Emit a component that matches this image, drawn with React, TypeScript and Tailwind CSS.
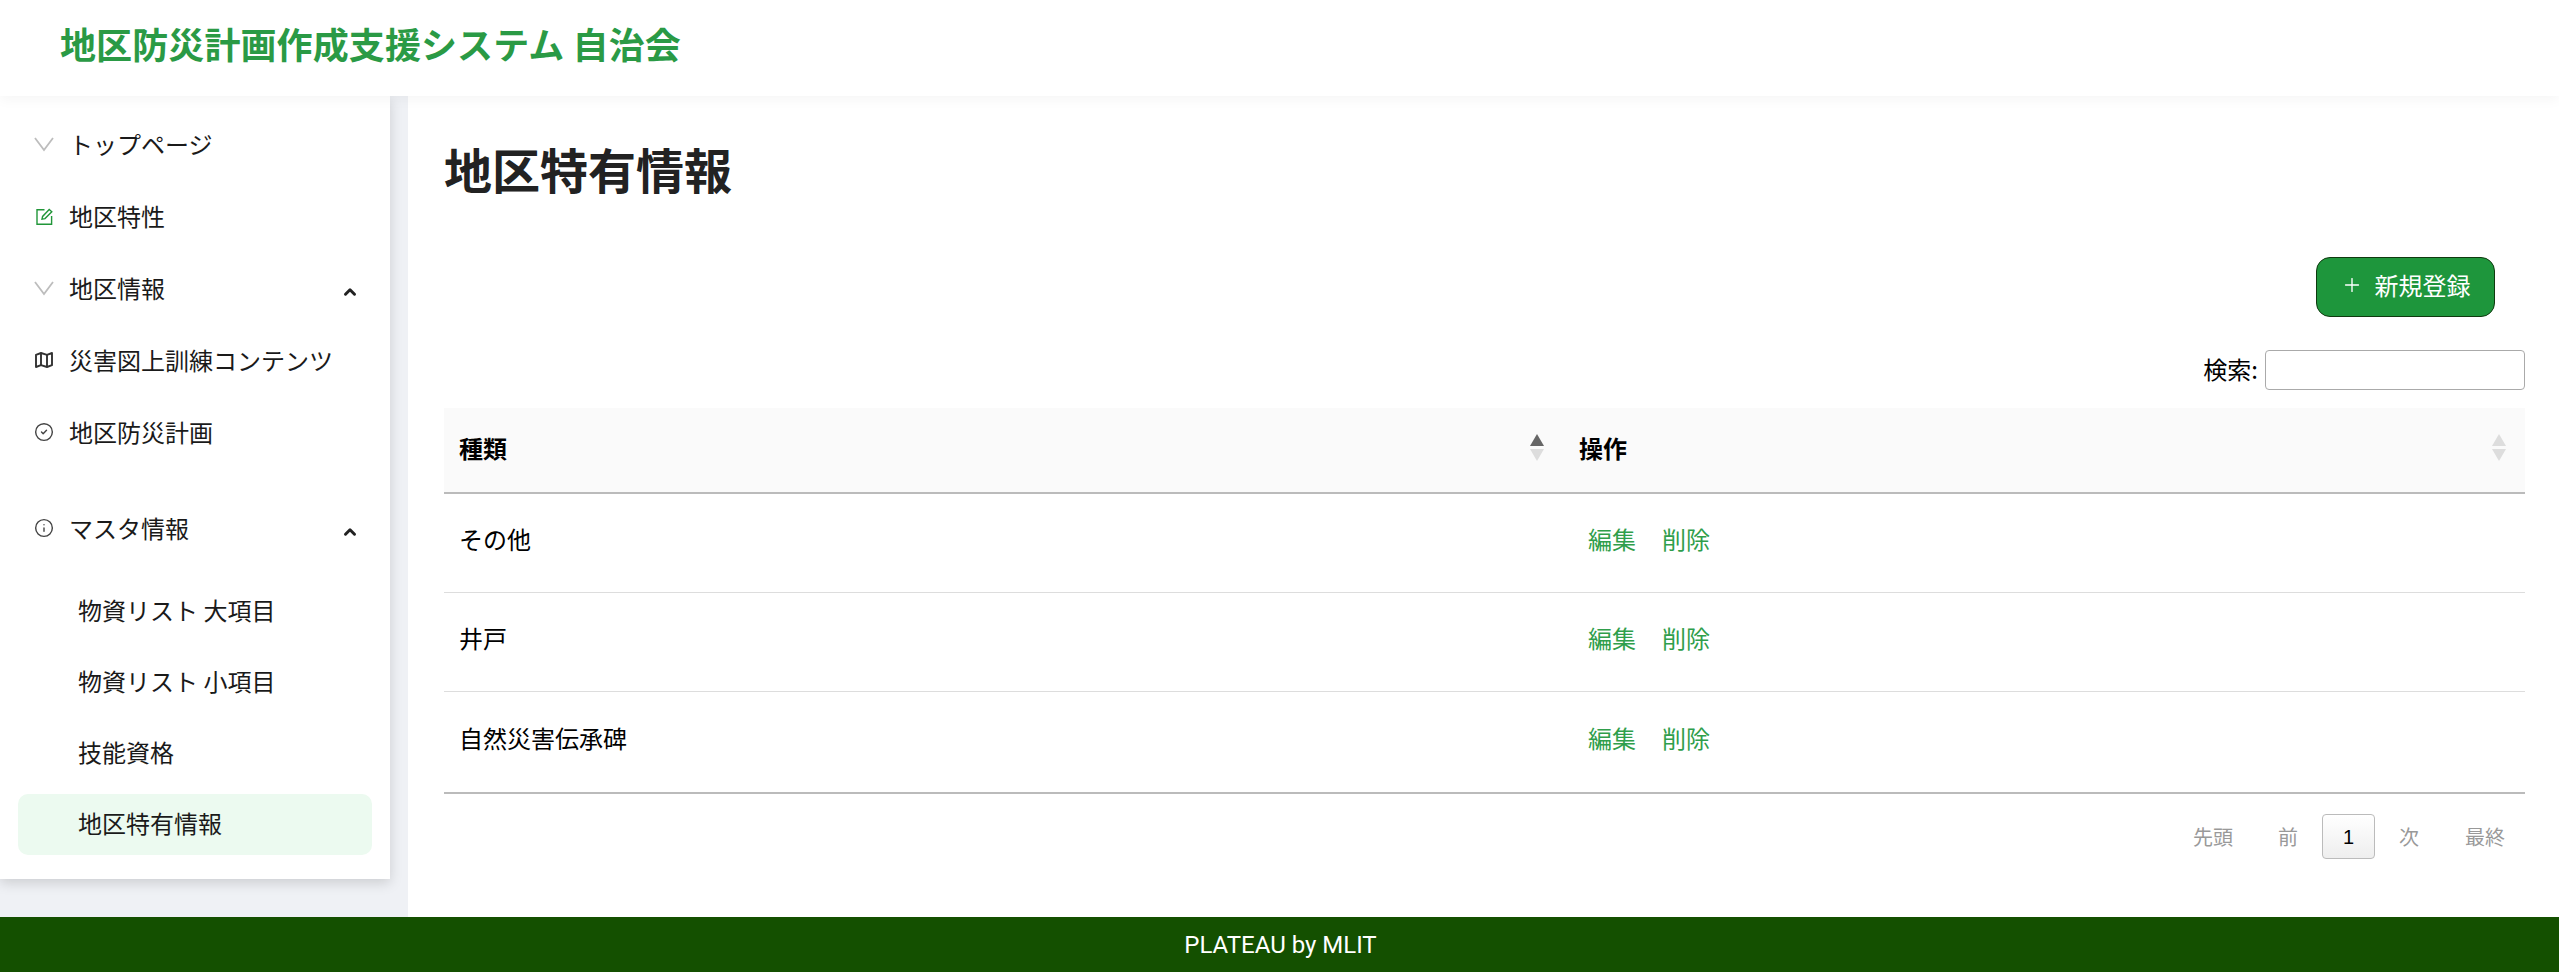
import { ChevronUp, CircleCheck, Info, Plus } from "lucide-react";
import type { ReactNode } from "react";

const rows = ["その他", "井戸", "自然災害伝承碑"];

function NavItem({ icon, label, open }: { icon: ReactNode; label: string; open?: boolean }) {
    return (
        <div className="flex h-[72px] items-center pl-[34px] pr-[31px]">
            <div className="flex w-[35px] shrink-0 items-center">{icon}</div>
            <span className="flex-1 text-[24px] leading-[36px] text-[#1a1a1a]">{label}</span>
            {open && <ChevronUp className="mt-[7px] h-[18px] w-[18px] text-[#222]" strokeWidth={4} />}
        </div>
    );
}

function SubItem({ label, active }: { label: string; active?: boolean }) {
    return (
        <div className={`mx-[18px] flex h-[61px] items-center rounded-[10px] pb-[4px] pl-[60px] text-[24px] text-[#1a1a1a] ${active ? "bg-[#ecfaf0]" : ""}`}>
            {label}
        </div>
    );
}

function SortIcon({ active }: { active?: boolean }) {
    return (
        <div className="flex flex-col gap-[3px]">
            <div className={`h-0 w-0 border-x-[7px] border-b-[12px] border-x-transparent ${active ? "border-b-[#666]" : "border-b-[#ddd]"}`} />
            <div className="h-0 w-0 border-x-[7px] border-t-[12px] border-x-transparent border-t-[#ddd]" />
        </div>
    );
}

function ThinChevron() {
    return (
        <svg width="20" height="15" viewBox="0 0 20 15" fill="none" stroke="#bdbdbd" strokeWidth="1.8" className="mt-[1px]">
            <path d="M1 1 L10 13 L19 1" />
        </svg>
    );
}

function EditIcon() {
    return (
        <svg width="17" height="17" viewBox="0 0 17 17" fill="none" stroke="#219639" strokeWidth="1.4" className="ml-[2px]">
            <path d="M8.5 1.7 H1 V16.3 H15.6 V8" />
            <path d="M6 11.2 L6.6 8.4 L13.2 1.4 L15.8 3.8 L9 10.6 Z" />
        </svg>
    );
}

function MapIcon() {
    return (
        <svg width="18" height="16" viewBox="0 0 18 16" fill="none" stroke="#333" strokeWidth="1.9" strokeLinejoin="round" className="ml-[1px]">
            <path d="M1 2.8 L6 1 L12 2.8 L17 1 V13.2 L12 15 L6 13.2 L1 15 Z" />
            <path d="M6 1 V13.2 M12 2.8 V15" />
        </svg>
    );
}

export default function App() {
    return (
        <div className="flex h-screen flex-col bg-white font-['Noto_Sans_CJK_JP','Noto_Sans',sans-serif] text-black">
            {/* Header */}
            <header className="relative z-20 flex h-[96px] shrink-0 items-center bg-white pb-[10px] pl-[60px] shadow-[0_4px_12px_rgba(0,0,0,0.04)]">
                <h1 className="text-[36px] font-bold tracking-[0.1px] text-[#2a9a45]">地区防災計画作成支援システム 自治会</h1>
            </header>

            <div className="flex min-h-0 flex-1">
                {/* Sidebar */}
                <div className="w-[408px] shrink-0 bg-[#eff1f5]">
                    <aside className="relative z-10 w-[390px] bg-white pt-[12px] pb-[24px] shadow-[0_4px_12px_rgba(0,0,0,0.15)]">
                        <NavItem icon={<ThinChevron />} label="トップページ" />
                        <NavItem icon={<EditIcon />} label="地区特性" />
                        <NavItem icon={<ThinChevron />} label="地区情報" open />
                        <NavItem icon={<MapIcon />} label="災害図上訓練コンテンツ" />
                        <NavItem icon={<CircleCheck className="h-[20px] w-[20px] text-[#444]" strokeWidth={1.7} />} label="地区防災計画" />
                        <div className="mt-[24px]">
                            <NavItem icon={<Info className="h-[20px] w-[20px] text-[#444]" strokeWidth={1.7} />} label="マスタ情報" open />
                        </div>
                        <div className="mt-[17px] flex flex-col gap-[10px]">
                            <SubItem label="物資リスト 大項目" />
                            <SubItem label="物資リスト 小項目" />
                            <SubItem label="技能資格" />
                            <SubItem label="地区特有情報" active />
                        </div>
                    </aside>
                </div>

                {/* Main */}
                <main className="min-w-0 flex-1 pl-[36px] pr-[34px]">
                    <h2 className="mt-[43px] text-[48px] leading-[58px] font-bold text-[#222]">地区特有情報</h2>
                    <div className="mt-[60px] flex justify-end pr-[30px]">
                        <button className="flex h-[60px] w-[179px] items-center justify-center gap-[12px] rounded-[14px] border border-[#0f3a0f] bg-[#1e963c] pb-[4px] text-[24px] text-white">
                            <Plus className="h-[22px] w-[22px]" strokeWidth={1.5} />
                            新規登録
                        </button>
                    </div>
                    <div className="mt-[33px] flex items-center justify-end gap-[7px] text-[24px]">
                        <label className="-mt-[3px]">検索:</label>
                        <input className="h-[40px] w-[260px] rounded-[4px] border border-[#aaa] bg-white" />
                    </div>
                    <table className="mt-[18px] w-full table-fixed border-collapse text-[24px]">
                        <thead>
                            <tr className="h-[85px] border-b-2 border-[#bbb] bg-[#fafafa]">
                                <th className="w-[1119px] pr-[19px] pb-[5px] pl-[15px] text-left font-bold">
                                    <div className="flex items-center justify-between">
                                        種類
                                        <SortIcon active />
                                    </div>
                                </th>
                                <th className="pr-[19px] pb-[5px] pl-[16px] text-left font-bold">
                                    <div className="flex items-center justify-between">
                                        操作
                                        <SortIcon />
                                    </div>
                                </th>
                            </tr>
                        </thead>
                        <tbody>
                            {rows.map((row) => (
                                <tr key={row} className="h-[99px] border-b border-[#ddd] last:h-[102px] last:border-b-2 last:border-[#bbb]">
                                    <td className="pb-[7px] pl-[15px]">{row}</td>
                                    <td className="pb-[7px] pl-[25px] text-[#2f9e4b]">
                                        <span className="mr-[26px]">編集</span>
                                        <span>削除</span>
                                    </td>
                                </tr>
                            ))}
                        </tbody>
                    </table>
                    <div className="mt-[20px] flex items-center justify-end pr-[20px] text-[20px] text-[#999]">
                        <span>先頭</span>
                        <span className="ml-[45px]">前</span>
                        <span className="ml-[24px] flex h-[45px] w-[53px] items-center justify-center rounded-[4px] border border-[#bbb] bg-gradient-to-b from-white to-[#eee] font-['Liberation_Sans',sans-serif] text-black">1</span>
                        <span className="ml-[24px]">次</span>
                        <span className="ml-[46px]">最終</span>
                    </div>
                </main>
            </div>

            {/* Footer */}
            <footer className="relative z-20 flex h-[55px] shrink-0 items-center justify-center bg-[#145000] pt-[1px] pl-[2px] font-['Roboto',sans-serif] text-[24px] text-white">
                PLATEAU by MLIT
            </footer>
        </div>
    );
}
